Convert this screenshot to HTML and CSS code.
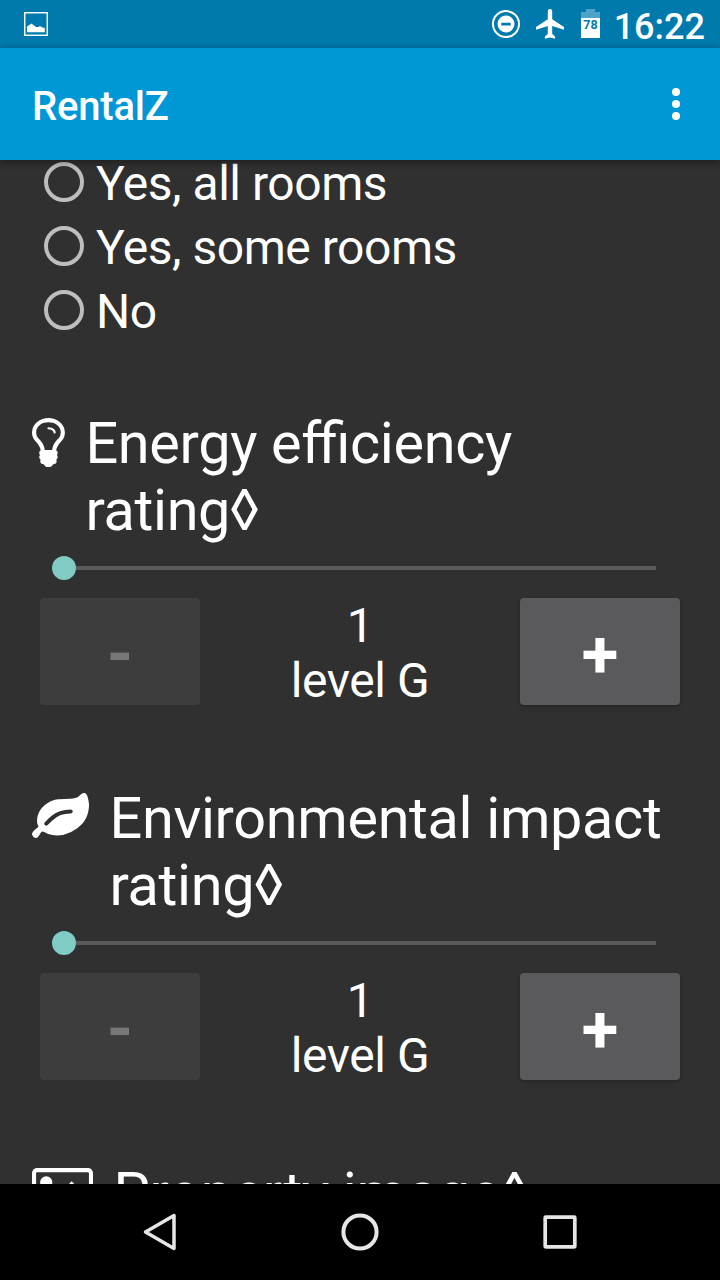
FILE: index.html
```html
<!DOCTYPE html>
<html lang="en">
<head>
<meta charset="utf-8">
<title>RentalZ</title>
<link rel="stylesheet" href="styles.css">
</head>
<body>
<div class="screen">
  <div class="status">
    <svg class="status-picture" width="24" height="24" viewBox="0 0 24 24"><rect x=".75" y=".75" width="22.500" height="22.500" fill="none" stroke="#fff" stroke-width="1.400"/><path d="M3 20.200v-5.700l4.500-3 4.500 3.500h2.500l1.500-1 2.500 1.500 2.300.5v4.200z" fill="#fff"/></svg>
    <svg class="status-dnd" width="28" height="28" viewBox="0 0 28 28"><circle cx="14" cy="14" r="13" fill="none" stroke="#fff" stroke-width="2"/><path d="M14 5.500a8.500 8.500 0 1 0 0 17a8.500 8.500 0 0 0 0-17zM9.300 12.700h9.400v2.700H9.300z" fill="#fff" fill-rule="evenodd"/></svg>
    <svg class="status-plane" width="28" height="30" viewBox="0 0 28 30"><path d="M28 20.800v-2.900L16.200 10.200V2.200a2.200 2.200 0 0 0-4.400 0v8L0 17.900v2.900l11.800-3.700v8L8.900 27.500v2.300l5.100-1.400 5.100 1.400v-2.300l-2.900-2.400v-8z" fill="#fff"/></svg>
    <svg class="status-battery" width="19" height="29" viewBox="0 0 19 29"><path d="M0 9V3h5V0h9v3h5v6z" fill="#4da3c8"/><path d="M0 9h19v20H0z" fill="#fff"/><text class="battery-text" x="9.500" y="20" text-anchor="middle">78</text></svg>
    <span class="clock">16:22</span>
  </div>
  <header class="appbar">
    <h1 class="app-title">RentalZ</h1>
    <svg width="8" height="32" viewBox="0 0 8 32" fill="#fff"><circle cx="4" cy="4" r="4"/><circle cx="4" cy="16" r="4"/><circle cx="4" cy="28" r="4"/></svg>
  </header>
  <main class="content">
    <div class="radios">
      <label class="radio"><span class="ring"></span><span class="radio-label">Yes, all rooms</span></label>
      <label class="radio"><span class="ring"></span><span class="radio-label">Yes, some rooms</span></label>
      <label class="radio"><span class="ring"></span><span class="radio-label">No</span></label>
    </div>
    <section class="field">
      <div class="heading">
        <svg class="icon" width="32.900" height="49.400" viewBox="384 128 1024 1536" fill="#fff"><path d="M1120 576q0 13-9.500 22.500t-22.500 9.500-22.500-9.500-9.500-22.500q0-46-54-71t-106-25q-13 0-22.500-9.500t-9.500-22.500 9.500-22.500 22.500-9.500q50 0 99.500 16t87 54 37.500 90zm160 0q0-72-34.500-134t-90-101.500-123-62-136.500-22.500-136.500 22.500-123 62-90 101.500-34.500 134q0 101 68 180 10 11 30.500 33t30.500 33q128 153 141 298h228q13-145 141-298 10-11 30.500-33t30.500-33q68-79 68-180zm128 0q0 155-103 268-45 49-74.500 87t-59.500 95.500-34 107.500q47 28 47 82 0 37-25 64 25 27 25 64 0 52-45 81 13 23 13 47 0 46-31.500 71t-77.500 25q-20 44-60 70t-87 26-87-26-60-70q-46 0-77.500-25t-31.500-71q0-24 13-47-45-29-45-81 0-37 25-64-25-27-25-64 0-54 47-82-4-50-34-107.500t-59.500-95.500-74.500-87q-103-113-103-268 0-99 44.500-184.500t117-142 164-89 186.500-32.500 186.500 32.500 164 89 117 142 44.500 184.500z"/></svg>
        <h2 class="label">Energy efficiency rating◊</h2>
      </div>
      <div class="slider"><span class="thumb"></span><span class="track"></span></div>
      <div class="stepper">
        <button class="step" disabled>-</button>
        <div class="value">1<br>level G</div>
        <button class="step">+</button>
      </div>
    </section>
    <section class="field">
      <div class="heading">
        <svg class="icon" width="57" height="45" viewBox="0 128 1792 1408" fill="#fff"><path d="M1280 704q0-26-19-45t-45-19q-172 0-318 49.500t-259.500 134-235.500 219.500q-19 21-19 45 0 26 19 45t45 19q24 0 45-19 27-24 74-71t67-66q137-124 268.500-176t313.500-52q26 0 45-19t19-45zm512-198q0 95-20 193-46 224-184.500 383t-357.500 268q-214 108-438 108-148 0-286-47-15-5-88-42t-96-37q-16 0-39.500 32t-45 70-52.500 70-60 32q-43 0-63.500-17.500t-45.500-59.500q-2-4-6-11t-5.500-10-3-9.500-1.500-13.500q0-35 31-73.500t68-65.500 68-56 31-48q0-4-14-38t-16-44q-9-51-9-104 0-115 43.500-220t119-184.500 170.500-139 204-95.500q55-18 145-25.500t179.500-9 178.500-6 163.500-24 113.500-56.500l29.500-29.500 29.500-28 27-20 36.500-16 43.500-4.500q39 0 70.500 46t47.500 112 24 124 8 96z"/></svg>
        <h2 class="label">Environmental impact rating◊</h2>
      </div>
      <div class="slider"><span class="thumb"></span><span class="track"></span></div>
      <div class="stepper">
        <button class="step" disabled>-</button>
        <div class="value">1<br>level G</div>
        <button class="step">+</button>
      </div>
    </section>
    <section class="field">
      <div class="heading">
        <svg class="icon" width="61" height="49" viewBox="-64 128 1920 1536" fill="#fff"><path d="M576 576q0 80-56 136t-136 56-136-56-56-136 56-136 136-56 136 56 56 136zm1024 384v448h-1408v-192l320-320 160 160 512-512zm96-704h-1600q-13 0-22.500 9.500t-9.500 22.500v1216q0 13 9.500 22.500t22.500 9.500h1600q13 0 22.500-9.500t9.500-22.500v-1216q0-13-9.500-22.500t-22.500-9.500zm160 32v1216q0 66-47 113t-113 47h-1600q-66 0-113-47t-47-113v-1216q0-66 47-113t113-47h1600q66 0 113 47t47 113z"/></svg>
        <h2 class="label">Property image◊</h2>
      </div>
    </section>
  </main>
  <nav class="navbar">
    <svg width="40" height="40" viewBox="0 0 40 40"><path d="M34 3.500v33L5.500 20z" fill="none" stroke="#e6e6e6" stroke-width="3.500" stroke-linejoin="round"/></svg>
    <svg width="40" height="40" viewBox="0 0 40 40"><circle cx="20" cy="20" r="16.600" fill="none" stroke="#e6e6e6" stroke-width="4"/></svg>
    <svg width="40" height="40" viewBox="0 0 40 40"><rect x="5.200" y="5.200" width="29.600" height="29.600" rx=".5" fill="none" stroke="#e6e6e6" stroke-width="3.700" stroke-linejoin="round"/></svg>
  </nav>
</div>
</body>
</html>
```
FILE: styles.css
```css
* {
  box-sizing: border-box;
}

body {
  margin: 0;
  background: #303030;
  color: #fff;
  font-family: Roboto, "Noto Sans", sans-serif;
}

.screen {
  display: flex;
  flex-direction: column;
  width: 720px;
  height: 1280px;
  overflow: hidden;
}

.status {
  display: flex;
  align-items: flex-start;
  height: 48px;
  flex: none;
  padding: 0 15px 0 24px;
  background: #007aac;
}

.status-picture {
  margin-top: 12px;
}

.status-dnd {
  margin: 10px 0 0 auto;
}

.status-plane {
  margin: 9px 0 0 16px;
}

.status-battery {
  margin: 9px 0 0 17px;
}

.battery-text {
  font: 700 12.500px Roboto, sans-serif;
  fill: #007aac;
}

.clock {
  margin-left: 14px;
  font-size: 36px;
  font-weight: 500;
  line-height: 54px;
}

.appbar {
  display: flex;
  align-items: center;
  justify-content: space-between;
  position: relative;
  z-index: 1;
  flex: none;
  height: 112px;
  padding: 0 40px 0 32px;
  background: #0097d6;
  box-shadow: 0 2px 8px rgba(0, 0, 0, .4);
}

.app-title {
  margin: 6px 0 0;
  font-size: 40px;
  font-weight: 500;
  line-height: 48px;
  letter-spacing: -.2px;
}

.content {
  flex: 1;
  min-height: 0;
  overflow: hidden;
}

.radios {
  margin: -10px 0 68px;
  padding-left: 44px;
}

.radio {
  display: flex;
  align-items: center;
  gap: 12px;
  height: 64px;
  font-size: 48px;
  line-height: 60px;
  letter-spacing: -.47px;
}

.radio-label {
  padding-top: 4px;
}

.ring {
  width: 40px;
  height: 40px;
  border: 4px solid #bebebe;
  border-radius: 50%;
}

.field {
  height: 375px;
  padding: 0 32px;
}

.heading {
  display: flex;
  align-items: flex-start;
  gap: 20.500px;
}

.icon {
  flex: none;
  margin-top: 8px;
}

.label {
  margin: 0;
  font-size: 57.600px;
  font-weight: 400;
  line-height: 67px;
  letter-spacing: -.33px;
  font-feature-settings: "liga" 1;
}

.slider {
  display: flex;
  align-items: center;
  height: 48px;
  padding: 0 32px 0 20px;
}

.thumb {
  width: 24px;
  height: 24px;
  border-radius: 50%;
  background: #80cbc4;
}

.track {
  flex: 1;
  height: 4px;
  background: #5a5a5a;
}

.stepper {
  display: flex;
  justify-content: space-between;
  padding: 6px 8px;
}

.step {
  width: 160px;
  height: 107px;
  padding: 5px 0 0;
  border: 0;
  border-radius: 4px;
  background: #5a5a5c;
  box-shadow: 0 2px 4px rgba(0, 0, 0, .25);
  color: #fff;
  font: 700 67px Roboto, sans-serif;
}

.step:disabled {
  background: #3d3d3d;
  box-shadow: none;
  color: #777;
}

.value {
  font-size: 48px;
  line-height: 55px;
  letter-spacing: -.4px;
  text-align: center;
}

.navbar {
  display: flex;
  flex: none;
  align-items: center;
  justify-content: center;
  gap: 160px;
  height: 96px;
  background: #000;
}
```
